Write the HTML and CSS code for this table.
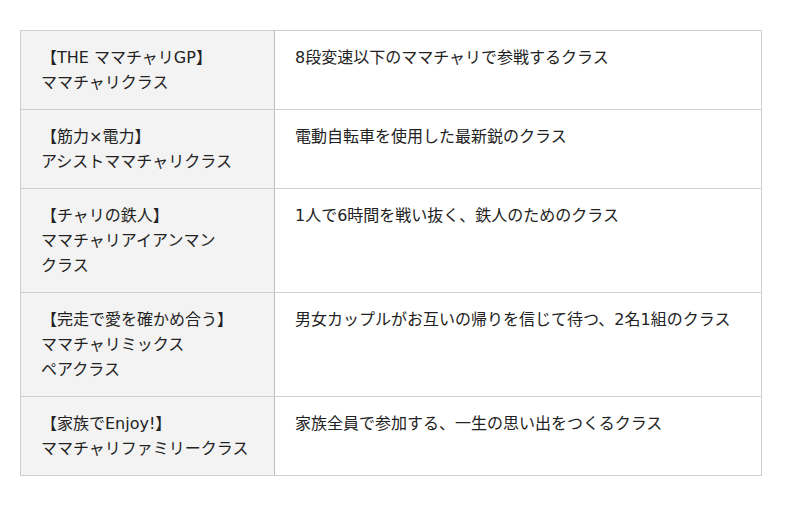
FILE: index.html
```html
<!DOCTYPE html>
<html lang="ja">
<head>
<meta charset="utf-8">
<link rel="stylesheet" href="styles.css">
</head>
<body>
<table class="classes">
  <tr>
    <th>【THE ママチャリGP】<br>ママチャリクラス</th>
    <td>8段変速以下のママチャリで参戦するクラス</td>
  </tr>
  <tr>
    <th>【筋力×電力】<br>アシストママチャリクラス</th>
    <td>電動自転車を使用した最新鋭のクラス</td>
  </tr>
  <tr>
    <th>【チャリの鉄人】<br>ママチャリアイアンマン<br>クラス</th>
    <td>1人で6時間を戦い抜く、鉄人のためのクラス</td>
  </tr>
  <tr>
    <th>【完走で愛を確かめ合う】<br>ママチャリミックス<br>ペアクラス</th>
    <td>男女カップルがお互いの帰りを信じて待つ、2名1組のクラス</td>
  </tr>
  <tr>
    <th>【家族でEnjoy!】<br>ママチャリファミリークラス</th>
    <td>家族全員で参加する、一生の思い出をつくるクラス</td>
  </tr>
</table>
</body>
</html>
```
FILE: styles.css
```css
html, body {
  margin: 0;
  padding: 0;
  background: #fff;
}
body {
  padding: 30px 38px 0 20px;
  font-family: "DejaVu Sans", "Noto Sans CJK JP", sans-serif;
  font-size: 16px;
  line-height: 25px;
  color: #222;
}
.classes {
  width: 742px;
  border-collapse: collapse;
}
.classes th,
.classes td {
  border: 1px solid #cfcfcf;
  padding: 14px 20px 14px 20px;
  vertical-align: top;
  text-align: left;
  font-weight: normal;
}
.classes th {
  width: 213px;
  background: #f3f3f3;
  border-right-color: #bdbdbd;
}
```
